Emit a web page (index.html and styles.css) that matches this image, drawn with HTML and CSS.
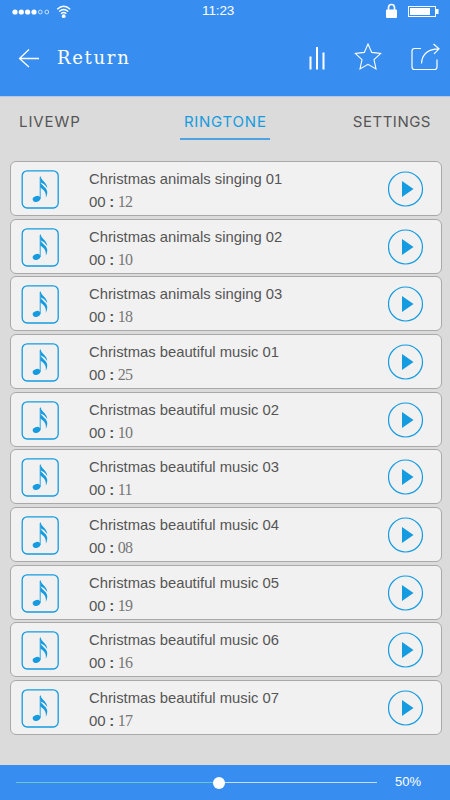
FILE: index.html
```
<!DOCTYPE html>
<html lang="en">
<head>
    <meta charset="UTF-8">
    <meta name="viewport" content="width=device-width, initial-scale=1.0">
    <title>Ringtones</title>
    <link rel="stylesheet" href="styles.css">
</head>
<body>
  <svg class="sprite" width="0" height="0">
    <symbol id="note" viewBox="0 0 38 39">
      <rect x="1.2" y="0.8" width="36" height="37.2" rx="5" fill="none" stroke="#149be0" stroke-width="1.3"/>
      <ellipse cx="15.5" cy="28.9" rx="3.9" ry="2.9" transform="rotate(-18 15.5 28.9)" fill="#149be0"/>
      <path d="M19.2 29V7" fill="none" stroke="#149be0" stroke-width="0.9"/>
      <path d="M19 6.5h.7c.4 4 6.400 6 6.600 11.500-2-3.200-4.300-4.800-6.800-5.800zM19.300 12c1 3.500 6.100 5 6.900 9.500 .2 2.200-.4 4.200-1.400 6.200 .8-5-1.500-7.500-5.500-10.200z" fill="#149be0"/>
    </symbol>
    <symbol id="play" viewBox="0 0 36 36">
      <circle cx="17.500" cy="18" r="17" fill="none" stroke="#149be0" stroke-width="1.2"/>
      <path d="M14 10v16l11.500-8z" fill="#149be0"/>
    </symbol>
  </svg>

  <div class="container">
    <div class="header">
      <div class="status">
        <svg class="signal" width="62" height="20" viewBox="0 0 62 20">
          <g fill="#fff">
            <circle cx="4" cy="10" r="2.600"/><circle cx="10.300" cy="10" r="2.600"/>
            <circle cx="16.600" cy="10" r="2.600"/><circle cx="23" cy="10" r="2.600"/>
            <circle cx="52.700" cy="14.200" r="1.900"/>
          </g>
          <g fill="none" stroke="#fff">
            <circle cx="29.300" cy="10" r="1.900" stroke-width="0.7"/><circle cx="35.800" cy="10" r="1.900" stroke-width="0.7"/>
            <path d="M46.200 7.200q6.500-5.800 13 0M48.200 9.500q4.500-4 9 0M50.100 11.700q2.600-2.200 5.200 0" stroke-width="1.400"/>
          </g>
        </svg>
        <span class="clock">11:23</span>
        <svg class="power" width="56" height="20" viewBox="0 0 56 20">
          <rect x="2" y="7.500" width="11" height="8.500" rx="1" fill="#fff"/>
          <path d="M4.500 8V5.500a3 3 0 0 1 6 0v3" fill="none" stroke="#fff" stroke-width="1.600"/>
          <rect x="24.500" y="4.500" width="27" height="10" fill="none" stroke="#fff"/>
          <rect x="26" y="6" width="20" height="7" fill="#fff"/>
          <rect x="52" y="7" width="2.500" height="5" fill="#fff"/>
        </svg>
      </div>
      <div class="toolbar">
        <svg class="back" width="22" height="20" viewBox="0 0 22 20">
          <path d="M21 10.500H1.500M11 1.500L1.500 10.500L11 19" fill="none" stroke="#fff" stroke-width="1.300"/>
        </svg>
        <h2>Return</h2>
        <svg class="tools" width="132" height="30" viewBox="0 0 132 30">
          <path d="M2.500 13.500v13M9 4v22.500M15.500 9.500v17" fill="none" stroke="#fff" stroke-width="2"/>
          <path d="M60 1l3.700 8.400 9 1-6.700 6.200 2 9.400-8-4.700-8 4.700 2-9.400-6.700-6.200 9-1z" fill="none" stroke="#fff" stroke-width="1.100"/>
          <path d="M113 5.500h-6.500q-2.500 0-2.500 2.500v16q0 2.500 2.500 2.500h20q2.500 0 2.500-2.500v-7.500" fill="none" stroke="#fff" stroke-width="1.200"/>
          <path d="M113.500 20.500C114 11 119 6 131 5.800M125.500 1l5.500 4.800-5 5" fill="none" stroke="#fff" stroke-width="1.200"/>
        </svg>
      </div>
    </div>

    <div class="tabs">
      <a class="tab livewp">LIVEWP</a>
      <a class="tab ringtone active">RINGTONE</a>
      <a class="tab settings">SETTINGS</a>
    </div>

    <div class="list">
      <div class="item">
        <svg class="note"><use href="#note"/></svg>
        <div class="info"><p class="name">Christmas animals singing 01</p><p class="time">00<b>:</b><span>12</span></p></div>
        <svg class="play"><use href="#play"/></svg>
      </div>
      <div class="item">
        <svg class="note"><use href="#note"/></svg>
        <div class="info"><p class="name">Christmas animals singing 02</p><p class="time">00<b>:</b><span>10</span></p></div>
        <svg class="play"><use href="#play"/></svg>
      </div>
      <div class="item">
        <svg class="note"><use href="#note"/></svg>
        <div class="info"><p class="name">Christmas animals singing 03</p><p class="time">00<b>:</b><span>18</span></p></div>
        <svg class="play"><use href="#play"/></svg>
      </div>
      <div class="item">
        <svg class="note"><use href="#note"/></svg>
        <div class="info"><p class="name">Christmas beautiful music 01</p><p class="time">00<b>:</b><span>25</span></p></div>
        <svg class="play"><use href="#play"/></svg>
      </div>
      <div class="item">
        <svg class="note"><use href="#note"/></svg>
        <div class="info"><p class="name">Christmas beautiful music 02</p><p class="time">00<b>:</b><span>10</span></p></div>
        <svg class="play"><use href="#play"/></svg>
      </div>
      <div class="item">
        <svg class="note"><use href="#note"/></svg>
        <div class="info"><p class="name">Christmas beautiful music 03</p><p class="time">00<b>:</b><span>11</span></p></div>
        <svg class="play"><use href="#play"/></svg>
      </div>
      <div class="item">
        <svg class="note"><use href="#note"/></svg>
        <div class="info"><p class="name">Christmas beautiful music 04</p><p class="time">00<b>:</b><span>08</span></p></div>
        <svg class="play"><use href="#play"/></svg>
      </div>
      <div class="item">
        <svg class="note"><use href="#note"/></svg>
        <div class="info"><p class="name">Christmas beautiful music 05</p><p class="time">00<b>:</b><span>19</span></p></div>
        <svg class="play"><use href="#play"/></svg>
      </div>
      <div class="item">
        <svg class="note"><use href="#note"/></svg>
        <div class="info"><p class="name">Christmas beautiful music 06</p><p class="time">00<b>:</b><span>16</span></p></div>
        <svg class="play"><use href="#play"/></svg>
      </div>
      <div class="item">
        <svg class="note"><use href="#note"/></svg>
        <div class="info"><p class="name">Christmas beautiful music 07</p><p class="time">00<b>:</b><span>17</span></p></div>
        <svg class="play"><use href="#play"/></svg>
      </div>
    </div>

    <div class="player">
      <div class="track"><div class="knob"></div></div>
      <span class="percent">50%</span>
    </div>
  </div>
</body>
</html>
```

FILE: styles.css
```
* {
  box-sizing: border-box;
}

body {
  margin: 0;
  font-family: "Liberation Sans", Arial, sans-serif;
  background-color: #dbdbdb;
}

h2,
p {
  margin: 0;
  font-weight: normal;
}

.sprite {
  display: block;
}

.container {
  display: flex;
  flex-direction: column;
  width: 450px;
  height: 800px;
  overflow: hidden;
}

.header {
  height: 97px;
  background-color: #388ef0;
  border-bottom: 1px solid #b9c5ea;
  color: #fff;
}

.status {
  display: flex;
  height: 42px;
  padding: 2px 10px 0 11px;
}

.clock {
  margin-left: 129px;
  font-size: 13.5px;
  line-height: 18px;
  letter-spacing: -0.1px;
}

.power {
  margin-left: auto;
}

.toolbar {
  display: flex;
  align-items: flex-start;
  padding: 0 10px 0 18px;
}

.back {
  margin-top: 6px;
}

.toolbar h2 {
  margin-left: 17px;
  font-family: "DejaVu Serif", serif;
  font-size: 18px;
  line-height: 32px;
  letter-spacing: 1.7px;
}

.tools {
  margin-top: 1px;
  margin-left: auto;
}

.tabs {
  display: flex;
  height: 64px;
  padding: 9px 19px 0;
}

.tab {
  height: 34px;
  font-family: Inter, sans-serif;
  font-size: 15px;
  line-height: 32px;
  color: #555;
}

.livewp {
  width: 161px;
  letter-spacing: 0.9px;
}

.settings {
  margin-left: 83px;
  letter-spacing: 0.5px;
}

.active {
  width: 90px;
  padding-left: 4px;
  letter-spacing: 0.75px;
  color: #149be0;
  border-bottom: 2px solid #4fa3e0;
}

.list {
  display: flex;
  flex-direction: column;
  gap: 2.67px;
  padding: 0 8px 0 10px;
}

.item {
  display: flex;
  height: 55px;
  padding: 8px 17px 0 10px;
  background-color: #f1f1f1;
  border: 1px solid #a9a9a9;
  border-radius: 6px;
}

.note {
  width: 38px;
  height: 39px;
}

.info {
  margin-left: 30px;
  color: #555;
}

.name {
  font-size: 14.8px;
  line-height: 19px;
}

.time {
  margin-top: 3px;
  font-size: 15px;
  line-height: 19px;
}

.time b {
  display: inline-block;
  width: 12px;
  text-align: center;
}

.time span {
  font-family: "Liberation Serif", serif;
  font-size: 16px;
  letter-spacing: -0.6px;
  color: #777;
}

.play {
  width: 36px;
  height: 36px;
  margin: 1px 0 0 auto;
}

.player {
  display: flex;
  align-items: center;
  height: 35px;
  margin-top: auto;
  padding: 0 29px 2px 16px;
  background-color: #388ef0;
  color: #fff;
}

.track {
  position: relative;
  top: 1px;
  width: 361px;
  height: 1px;
  background: linear-gradient(to right, #6cc5c5 56%, #c5def8 56%);
}

.knob {
  position: absolute;
  left: 197px;
  top: -5px;
  width: 12px;
  height: 12px;
  border-radius: 50%;
  background-color: #fff;
}

.percent {
  margin-left: auto;
  font-size: 13px;
}
```
